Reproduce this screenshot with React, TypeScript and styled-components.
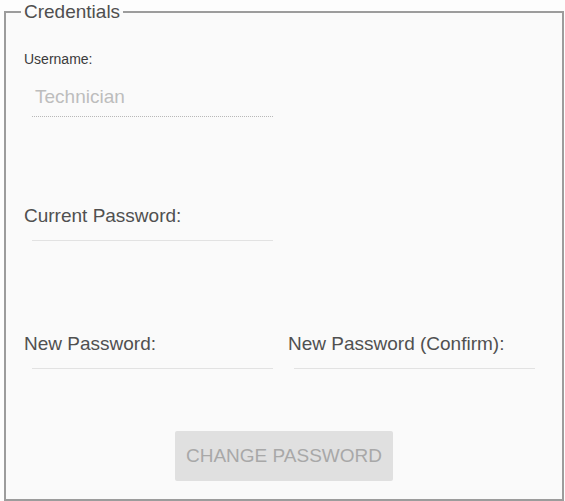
import React from "react";
import styled, { createGlobalStyle } from "styled-components";

const Global = createGlobalStyle`
  html, body {
    margin: 0;
    padding: 0;
    background: #fdfdfd;
  }
  body {
    font-family: "Liberation Sans", Arial, sans-serif;
    width: 565px;
    height: 501px;
    overflow: hidden;
  }
`;

const Panel = styled.fieldset`
  box-sizing: border-box;
  margin: 1px 0 0 4px;
  width: 560px;
  height: 500px;
  padding: 28px 18px 0 18px;
  border: 2px solid #9c9c9c;
  background: #fafafa;
  display: flex;
  flex-direction: column;
  min-width: 0;
`;

const Legend = styled.legend`
  margin-left: -3px;
  padding: 0 3px;
  font-size: 19px;
  line-height: 22px;
  color: #4f4f4f;
`;

const UserBlock = styled.div`
  display: flex;
  flex-direction: column;
  width: 250px;
`;

const SmallLabel = styled.label`
  font-size: 14px;
  line-height: 16px;
  color: #3a3a3a;
`;

const ReadOnlyValue = styled.div`
  margin: 19px 0 0 8px;
  width: 238px;
  padding: 0 0 8px 3px;
  font-size: 19px;
  line-height: 22px;
  color: #bdbdbd;
  border-bottom: 1px dotted #b8b8b8;
`;

const Row = styled.div<{ $top: number }>`
  display: grid;
  grid-template-columns: 264px 250px;
  margin-top: ${(p) => p.$top}px;
`;

const Field = styled.div`
  display: flex;
  flex-direction: column;
`;

const FieldLabel = styled.label`
  font-size: 19px;
  line-height: 22px;
  color: #505050;
`;

const Input = styled.input<{ $indent: number }>`
  box-sizing: border-box;
  margin: 0 0 0 ${(p) => p.$indent}px;
  width: 241px;
  height: 14px;
  padding: 0;
  border: none;
  border-bottom: 1px solid #e2e2e2;
  background: transparent;
  outline: none;
  font-family: inherit;
  font-size: 19px;
`;

const Actions = styled.div`
  display: flex;
  justify-content: center;
  margin-top: 62px;
`;

const Button = styled.button`
  box-sizing: border-box;
  width: 218px;
  height: 50px;
  border: none;
  border-radius: 2px;
  background: #e0e0e0;
  color: #a8a8a8;
  font-family: inherit;
  font-size: 19px;
  padding: 0 10px;
  cursor: default;
`;

export default function App() {
  return (
    <>
      <Global />
      <Panel>
        <Legend>Credentials</Legend>
        <UserBlock>
          <SmallLabel>Username:</SmallLabel>
          <ReadOnlyValue>Technician</ReadOnlyValue>
        </UserBlock>
        <Row $top={88}>
          <Field>
            <FieldLabel>Current Password:</FieldLabel>
            <Input type="password" $indent={8} />
          </Field>
        </Row>
        <Row $top={92}>
          <Field>
            <FieldLabel>New Password:</FieldLabel>
            <Input type="password" $indent={8} />
          </Field>
          <Field>
            <FieldLabel>New Password (Confirm):</FieldLabel>
            <Input type="password" $indent={6} />
          </Field>
        </Row>
        <Actions>
          <Button disabled>CHANGE PASSWORD</Button>
        </Actions>
      </Panel>
    </>
  );
}
